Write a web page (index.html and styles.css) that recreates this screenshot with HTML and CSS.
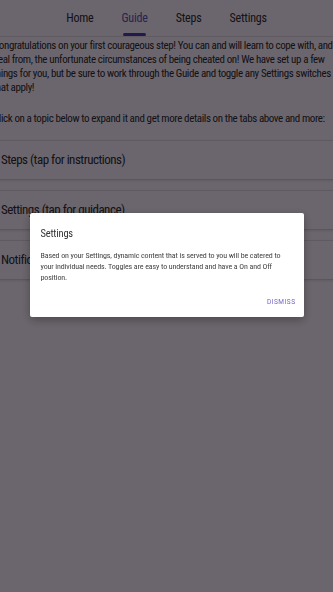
FILE: index.html
```html
<!DOCTYPE html>
<html>
<head>
	<title>Guide</title>
	<meta name="viewport" content="width=device-width, initial-scale=1">
	<link rel="stylesheet" href="styles.css">
</head>
<body>
	<div class="tab-bar">
		<div class="tab">Home</div>
		<div class="tab tab-active">Guide</div>
		<div class="tab">Steps</div>
		<div class="tab">Settings</div>
	</div>

	<div class="guide">
		<p class="intro">Congratulations on your first courageous step! You can and will learn to cope with, and heal from, the unfortunate circumstances of being cheated on! We have set up a few things for you, but be sure to work through the Guide and toggle any Settings switches that apply!</p>
		<p class="intro intro-last">Click on a topic below to expand it and get more details on the tabs above and more:</p>

		<div class="topic">Steps (tap for instructions)</div>
		<div class="topic">Settings (tap for guidance)</div>
		<div class="topic">Notifications (tap for details)</div>
	</div>

	<!-- dialog over the dimmed page -->
	<div class="overlay">
		<div class="dialog">
			<div class="dialog-title">Settings</div>
			<div class="dialog-text">Based on your Settings, dynamic content that is served to you will be catered to your individual needs. Toggles are easy to understand and have a On and Off position.</div>
			<div class="dialog-actions">
				<button class="dialog-button">Dismiss</button>
			</div>
		</div>
	</div>
</body>
</html>
```

FILE: styles.css
```css
body {
  margin: 0;
  background-color: #f3e8f8;
  color: #2e2a33;
  font-family: Roboto, sans-serif;
  font-stretch: 75%;
  overflow: hidden;
}

.tab-bar {
  display: flex;
  justify-content: center;
  height: 36px;
  border-bottom: 1px solid #d9d0de;
}

.tab {
  position: relative;
  padding: 0 14px;
  font-size: 12px;
  letter-spacing: -0.2px;
  line-height: 36px;
  color: #2e2a33;
}

.tab-active {
  color: #5b4fb0;
}

/* little bar under the current tab */
.tab-active:after {
  content: "";
  position: absolute;
  left: 16px;
  right: 16px;
  bottom: 0;
  height: 3px;
  border-radius: 2px;
  background-color: #4a3cb0;
}

.guide {
  margin-left: -7px;
  width: 352px;
}

.intro {
  font-size: 11px;
  letter-spacing: -0.4px;
  line-height: 14px;
  margin: 2px 0 17px 0;
}

.intro-last {
  margin-bottom: 14px;
}

.topic {
  height: 38px;
  line-height: 38px;
  padding: 0 8px;
  margin-bottom: 10px;
  font-size: 13px;
  letter-spacing: -0.5px;
  border-top: 1px solid #d8cedd;
  border-bottom: 1px solid #cfc4d4;
  box-shadow: 0 1px 2px rgba(0, 0, 0, 0.1);
}

.overlay {
  position: fixed;
  top: 0;
  left: 0;
  right: 0;
  bottom: 0;
  background-color: rgba(0, 0, 0, 0.56);
  display: flex;
  justify-content: center;
  align-items: flex-start;
  padding-top: 213px;
}

.dialog {
  width: 252px;
  padding: 13px 11px 11px 11px;
  background-color: white;
  border-radius: 2px;
  box-shadow: 0 3px 10px rgba(0, 0, 0, 0.3);
  color: #333;
}

.dialog-title {
  font-size: 10.5px;
  letter-spacing: -0.2px;
  line-height: 16px;
  margin-bottom: 8px;
}

.dialog-text {
  font-size: 8px;
  letter-spacing: -0.12px;
  line-height: 11px;
  color: #444;
  padding-right: 8px;
}

.dialog-actions {
  display: flex;
  justify-content: flex-end;
  margin-top: 15px;
  margin-right: -3px;
}

.dialog-button {
  background: none;
  border: none;
  padding: 0;
  font-family: inherit;
  font-size: 6.5px;
  text-transform: uppercase;
  letter-spacing: 0.5px;
  color: #6f63c4;
}
```
